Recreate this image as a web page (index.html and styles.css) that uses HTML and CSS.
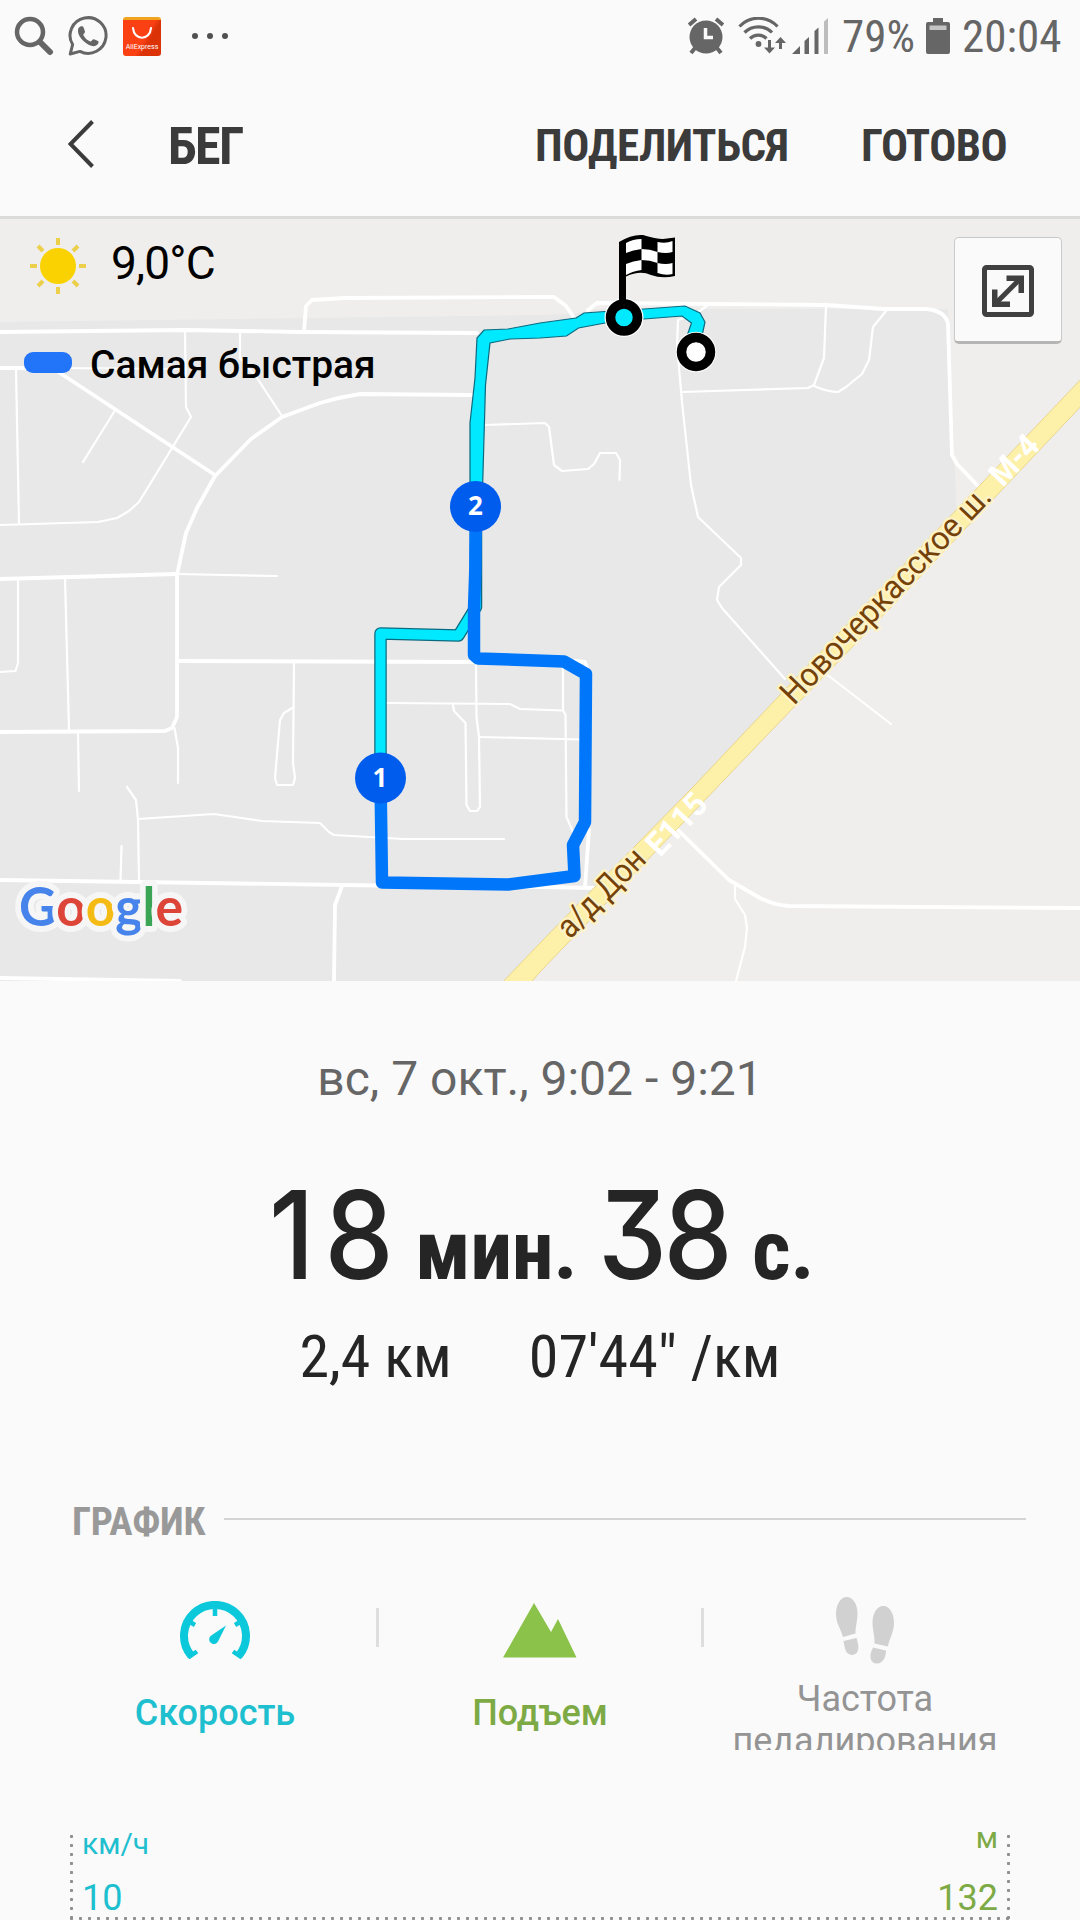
FILE: index.html
```html
<!DOCTYPE html>
<html lang="ru">
<head>
<meta charset="UTF-8">
<meta name="viewport" content="width=device-width, initial-scale=1.0">
<title>Бег</title>
<link rel="stylesheet" href="styles.css">
</head>
<body>
<div class="statusbar">
  <svg class="st-search" width="40" height="40" viewBox="0 0 40 40">
    <circle cx="16" cy="16" r="13" fill="none" stroke="#666" stroke-width="4.500"/>
    <path d="M26 26 L36 36" stroke="#666" stroke-width="6" stroke-linecap="round"/>
  </svg>
  <svg class="st-whatsapp" width="40" height="40" viewBox="0 0 40 40">
    <path d="M2.2 38 L4.6 28.6 A18 17.8 0 1 1 12 35.4 Z" fill="none" stroke="#666" stroke-width="3" stroke-linejoin="round"/>
    <path d="M11 11.5 C13 9.5 15 10 15.6 11.5 L17 15.5 C17.3 17 15 18.300 15.300 19 C17 22.500 19.500 24.500 22.500 25.500 C23.500 25.700 24.500 23 26 23.300 L30 25 C31.500 26 30 29 27 30 C21 31.500 10 22 10 15.500 C10 13.500 10 12.500 11 11.500 Z" fill="#666"/>
  </svg>
  <div class="st-ali"><svg width="38" height="26" viewBox="0 0 38 26"><path d="M10 8 C11 21 27 21 28 8" fill="none" stroke="#fff" stroke-width="2.2" stroke-linecap="round"/></svg><span>AliExpress</span></div>
  <div class="st-dots"><i></i><i></i><i></i></div>

  <svg class="st-alarm" width="36" height="38" viewBox="0 0 36 38">
    <circle cx="18" cy="20" r="16.500" fill="#666"/>
    <path d="M1 8 L8 2 M28 2 L35 8" stroke="#666" stroke-width="4"/>
    <path d="M7 31 L3 36 M29 31 L33 36" stroke="#666" stroke-width="4"/>
    <path d="M17.500 11 V20.500 H25" fill="none" stroke="#fafafa" stroke-width="3.500"/>
  </svg>
  <svg class="st-wifi" width="48" height="38" viewBox="0 0 48 38">
    <g fill="none" stroke="#666" stroke-width="3.200">
      <path d="M1.500 9.500 C12 -1.500 29 -1.500 39.500 9.500"/>
      <path d="M6.500 15.500 C14 8 27 8 34 15.500"/>
      <path d="M12 21.500 C16.500 17 24 17 28.500 21.500"/>
      <path d="M31.500 23 V34 M42.500 32 V23" stroke-width="3"/>
    </g>
    <circle cx="20.500" cy="27" r="2.900" fill="#666"/>
    <path d="M26 30.500 H37 L31.500 36.500 Z M37 26 H48 L42.500 20 Z" fill="#666"/>
  </svg>
  <svg class="st-signal" width="36" height="36" viewBox="0 0 36 36">
    <path d="M0 36 L8 28 V36 Z M12.500 36 V23 L17 19 V36 Z M22.500 36 V13 L26.500 9.500 V36 Z" fill="#666"/>
    <path d="M32 36 V3.500 L36 0 V36 Z" fill="#bdbdbd"/>
  </svg>
  <span class="st-text st-percent">79%</span>
  <svg class="st-battery" width="24" height="36" viewBox="0 0 24 36">
    <path d="M7 0 H17 V4 H22 Q24 4 24 6 V34 Q24 36 22 36 H2 Q0 36 0 34 V6 Q0 4 2 4 H7 Z" fill="#666"/>
    <rect x="3.500" y="7.500" width="17" height="4.500" fill="#c4c4c4"/>
  </svg>
  <span class="st-text st-time">20:04</span>
</div>

<div class="appbar">
  <svg class="back" width="27" height="50" viewBox="0 0 27 50"><path d="M24.500 2.500 L2.500 25 L24.500 47.500" fill="none" stroke="#3b3b3b" stroke-width="4"/></svg>
  <h1>БЕГ</h1>
  <a class="share">ПОДЕЛИТЬСЯ</a>
  <a class="done">ГОТОВО</a>
</div>

<div class="map">
  <svg class="map-canvas" width="1080" height="762" viewBox="0 219 1080 762">
    <polygon fill="#e8e8e8" points="0,322 540,315 573,314 600,309 948,309 952,400 957,520 780,700 510,981 0,981"/>

    <!-- streets -->
    <g class="road wide">
      <path d="M0 332 L186 330 L300 332 L477 333"/>
      <path d="M304 332 L306 306 L312 300 L345 298 L540 297 L554 297 L566 306 L573 316"/>
      <path d="M588 310 L597 303 L826 305 L884 309 L926 309 Q946 311 948 324 L952 455 L957 464 L979 487"/>
      <path d="M57 371 L215 475"/>
      <path d="M472 395 L360 394 Q340 397 320 403 L282 417 L251 439 L215 476 L197 508 L186 533 L177 575 L177 717 L172 728 L165 731 L0 732"/>
      <path d="M0 579 L177 574"/>
      <path d="M177 661 L475 662"/>
      <path d="M0 368 L55 368"/>
      <path d="M0 880 L377 885.500 L540 887 L597 888"/>
      <path d="M342 886 L335 905 L334 981"/>
      <path d="M0 978 L180 981"/>
      <path d="M575 661 L585 662 L588 672"/>
      <path d="M589 830 L585 887"/>
      <path d="M678 830 L729 880 L760 898 Q774 905 788 906 L1080 908"/>
    </g>
    <g class="road">
      <path d="M55 368 L186 369"/>
      <path d="M185 331 L186 407 L191 417 L139 502 L129 511 L117 518 L98 522 L0 525"/>
      <path d="M240 331 L240 358 L257 378 L282 416"/>
      <path d="M16 370 L19 523"/>
      <path d="M114 412 L83 462"/>
      <path d="M177 574 L277 576"/>
      <path d="M18 578 L18 663 L15.500 671 L0 672"/>
      <path d="M65 578 L69 730"/>
      <path d="M78 733 L79 791"/>
      <path d="M174.500 728 L178 748 L178 783"/>
      <path d="M127 787 L136 800 L138 820 L139 880"/>
      <path d="M138 819 L214 814 L262 821 L320 823 L329 832 L334 835 L403 839 L504 839"/>
      <path d="M121.500 846 L120.500 880"/>
      <path d="M294 663 L293 763 L295 778 L293 785 L277 785 L275 778 L280 720 L284 713 L294 707"/>
      <path d="M387 703 L510 704 L520 709 L563 710.500"/>
      <path d="M453 705 L454 711 L465.500 723 L466.500 805 L470 811 L477 811 L480 807 L479 737 L476.500 717 L476 663"/>
      <path d="M479 737 L580 739.500"/>
      <path d="M563 668 L563 710 L565.500 715 L566.500 817 L573 832"/>
      <path d="M708 305 L694 315 L678 320 L677 345 L682 402 L691 485 L698 517 L741 558 L741 565 L719 587 L717 600 L722 608 L785 679"/>
      <path d="M682 392 L808 388 L814 385 L824 358 L826 306"/>
      <path d="M814 386 Q828 392 838 392 L846 387 L862 374 L869 360 L873 327 L886 311"/>
      <path d="M485 425 L545 423 L549 427 L554 465 L562 471 L588 469 L594 464 L600 453 L616 453 L620 460 L619.500 480"/>
      <path d="M827.500 675 L891 724"/>
      <path d="M735 883 L735 899 L745 915 L747 928 L745 947 L736 981"/>
    </g>

    <!-- highway -->
    <polygon class="highway" points="500,985 540,943 638,843 693,787 778,697 1084,376 1084,403 898,600 795,706 540,972 528,986"/>
    <text class="road-name" transform="translate(794 706) rotate(-46.200)" textLength="288" lengthAdjust="spacingAndGlyphs">Новочеркасское ш.</text>
    <text class="road-code" transform="translate(1003 488) rotate(-46.500)" textLength="56" lengthAdjust="spacingAndGlyphs">М-4</text>
    <text class="road-name" transform="translate(570 940) rotate(-45.500)" textLength="111" lengthAdjust="spacingAndGlyphs">а/д Дон</text>
    <text class="road-code" transform="translate(660 858) rotate(-46.500)" textLength="72" lengthAdjust="spacingAndGlyphs">E115</text>

    <!-- track -->
    <polygon class="slow" points="470,490 470,423 475,378 477,338 484,330 508,329 540,323 576,318 584,313 605,311.500 644,309 685,306 700,313 705,322 702,336 687,336 691.500,323 682,316 644,319 605,323 578.500,328 566.500,336 540,338 510,339 490,343 485.500,385 482.500,490"/>
    <path class="slow-edge" d="M380.500 770 V633.500 L458.500 635.500 L476 607 V530"/>
    <path class="slow-line" d="M380.500 770 V633.500 L458.500 635.500 L476 607 V530"/>
    <path class="fast" d="M475.800 510 L475.300 570 L474 610 L474 655 L478 658.500 L564 661.500 L586 674 L585 822 L573 845 L574.500 876 L508 884.500 L382 882.500 L380.500 778"/>

    <g class="km">
      <circle cx="475.500" cy="506.500" r="25.500"/>
      <text x="475.500" y="515">2</text>
      <circle cx="380.500" cy="778" r="25.500"/>
      <text x="380" y="786.500">1</text>
    </g>

    <path d="M619 300 V242 Q632 234 643 235 Q656 239 663 239 L675 237.500 V276 Q662 279 651 275 Q640 270 626 276.500 V300 Z" fill="#000"/>
    <path fill="#fff" d="M626 243 Q633 239 641.500 239 V249 Q633 250 626 253 Z M657.500 242 Q666 244 672.500 241 V252 Q666 254 657.500 252 Z M641.500 249 Q650 249 657.500 252 V263 Q650 260 641.500 260 Z M626 264 Q633 261 641.500 260 V270 Q633 271 626 275 Z M657.500 263 Q666 265 672.500 263 V274 Q666 276 657.500 273 Z"/>
    <circle cx="624" cy="317.500" r="19.500" fill="#fff"/>
    <circle cx="624" cy="317.500" r="13.500" fill="#00e9ff" stroke="#000" stroke-width="9.500"/>
    <circle cx="696" cy="352" r="20.300" fill="#fff"/>
    <circle cx="696" cy="352" r="14.500" fill="#fff" stroke="#000" stroke-width="9.500"/>
    <path d="M622.500 303 V270" stroke="#000" stroke-width="7"/>

    <text class="google" x="19" y="926" textLength="164" lengthAdjust="spacingAndGlyphs"><tspan fill="#4683ea">G</tspan><tspan fill="#dd4539">o</tspan><tspan fill="#f5bb15">o</tspan><tspan fill="#4683ea">g</tspan><tspan fill="#3ba556">l</tspan><tspan fill="#dd4539">e</tspan></text>
  </svg>

  <div class="weather">
    <svg width="58" height="58" viewBox="-29 -29 58 58">
      <circle r="18" fill="#fad201"/>
      <path d="M0 -28 V-21 M0 21 V28 M-28 0 H-21 M21 0 H28 M-20 -20 L-15 -15 M15 15 L20 20 M-20 20 L-15 15 M15 -15 L20 -20" stroke="#ecd04c" stroke-width="4"/>
    </svg>
    <span>9,0°C</span>
  </div>
  <div class="legend"><i></i><span>Самая быстрая</span></div>

  <div class="expand">
    <svg width="52" height="52" viewBox="0 0 52 52">
      <rect x="2.500" y="2.500" width="47" height="47" rx="2" fill="none" stroke="#404040" stroke-width="5"/>
      <path d="M15 37 L37 15" stroke="#404040" stroke-width="5"/>
      <path d="M24.500 10.500 H42 V28 H36.500 V16 H24.500 Z M10 24.500 H15.500 V36.500 H28 V42 H10 Z" fill="#404040"/>
    </svg>
  </div>
</div>

<div class="summary">
  <p class="date">вс, 7 окт., 9:02 - 9:21</p>
  <p class="duration"><b class="num n1">18</b><span class="unit u1">мин.</span><b class="num n2">38</b><span class="unit u2">с.</span></p>
  <p class="pace"><span>2,4 км</span><span>07'44" /км</span></p>
</div>

<div class="section-title"><h2>ГРАФИК</h2><hr></div>

<div class="tabs">
  <div class="tab speed">
    <svg width="72" height="58" viewBox="0 0 72 58">
      <path d="M12 54.500 A31 31 0 1 1 60 54.500" fill="none" stroke="#0bc8db" stroke-width="8"/>
      <path d="M36 7 V15 M10 20.500 L16 24 M62 20.500 L56 24 M9 56.500 L18 50.500 M63 56.500 L54 50.500" stroke="#0bc8db" stroke-width="4.500"/>
      <path d="M47 24.500 L39 40.500 A4.700 4.700 0 1 1 31.500 35 Z" fill="#0bc8db"/>
    </svg>
    <span>Скорость</span>
  </div>
  <i class="divider"></i>
  <div class="tab climb">
    <svg width="74" height="58" viewBox="0 0 74 58"><path d="M0 56.500 L31 2 L48 31 L55 18 L73.500 56.500 Z" fill="#8bc34a"/></svg>
    <span>Подъем</span>
  </div>
  <i class="divider"></i>
  <div class="tab cadence">
    <svg width="58" height="68" viewBox="0 0 58 68">
      <g fill="#d1d1d1">
        <path d="M10.500 0 C17 0 21.500 7 21.500 16 C21.500 24 19.500 29 19.500 36.500 L7 40 C5 32 0 27 0 17 C0 7 5 0 10.500 0 Z"/>
        <path d="M7.500 44 L20.500 41 C23 49 24 56 17 58 C10 58 9 53 7.500 44 Z"/>
        <path d="M47.500 9 C54 9 58 17 58 26 C58 36 53 42 52 49.500 L38.500 46.500 C39 39 36.500 33 36.500 26 C36.500 16 41 9 47.500 9 Z"/>
        <path d="M37 50.500 L50 53.500 C50 60 47 66.500 41 66.500 C34 66.500 32.500 59 37 50.500 Z"/>
      </g>
    </svg>
    <span>Частота<br>педалирования</span>
  </div>
</div>

<div class="chart">
  <div class="axis left"><small>км/ч</small><span>10</span></div>
  <div class="axis right"><small>м</small><span>132</span></div>
</div>
</body>
</html>
```
FILE: styles.css
```css
* { box-sizing: border-box; }
body { margin: 0; width: 1080px; height: 1920px; overflow: hidden; background: #fafafa; font-family: Roboto, "Noto Sans", sans-serif; color: #252525; }
h1, h2, p, hr { margin: 0; }
svg { display: block; flex: none; }

.statusbar { display: flex; align-items: center; height: 72px; padding-left: 14px; color: #666; }
.st-whatsapp { margin-left: 14px; }
.st-ali { width: 38px; height: 39px; margin-left: 15px; border-radius: 3px; border-top: 3px solid #f0a41d; background: linear-gradient(120deg, #fb4013 55%, #dc3208 65%); position: relative; }
.st-ali span { position: absolute; left: 0; right: 0; top: 22px; font-size: 7px; line-height: 10px; text-align: center; color: #fff; }
.st-dots { display: flex; gap: 9px; margin-left: 31px; }
.st-dots i { width: 6px; height: 6px; border-radius: 3px; background: #505050; }
.st-alarm { margin-left: 460px; }
.st-wifi { margin-left: 14px; }
.st-signal { margin-left: 6px; }
.st-text { font-size: 45px; line-height: 72px; font-family: "Roboto Condensed", Roboto; font-stretch: 75%; padding-top: 2px; white-space: nowrap; }
.st-percent { width: 72px; margin-left: 14px; }
.st-battery { margin-left: 12px; }
.st-time { margin-left: 12px; }

.appbar { display: flex; align-items: center; height: 144px; color: #3b3b3b; font-family: "Roboto Condensed", Roboto; font-stretch: 75%; font-weight: 700; font-size: 45px; white-space: nowrap; }
.back { margin-left: 68px; }
.appbar h1 { font-size: 52px; letter-spacing: -1.5px; width: 76px; margin-left: 73px; padding-top: 4px; }
.share { width: 253px; margin-left: 291px; padding-top: 2px; letter-spacing: -0.5px; }
.done { margin-left: 73px; padding-top: 2px; letter-spacing: -0.5px; }

.map { position: relative; height: 765px; border-top: 3px solid #dbdcda; background: #efeeec; }
.road path { fill: none; stroke: #fff; stroke-width: 2.2; stroke-linejoin: round; stroke-linecap: round; }
.road.wide path { stroke-width: 3.8; }
.highway { fill: #fdf0a8; stroke: #e9d58f; stroke-width: 1; }
.road-name { font-size: 33px; fill: #744108; stroke: #fdf2c6; stroke-width: 5; stroke-linejoin: round; paint-order: stroke; }
.road-code { font-size: 33px; font-weight: 700; fill: #fff; }
.slow { fill: #00e9ff; stroke: #0b6a80; stroke-width: 1.2; }
.slow-edge { fill: none; stroke: #0b6a80; stroke-width: 12.5; stroke-linejoin: round; }
.slow-line { fill: none; stroke: #00e9ff; stroke-width: 10; stroke-linejoin: round; }
.fast { fill: none; stroke: #0077fb; stroke-width: 12.5; stroke-linejoin: round; }
.km circle { fill: #005ced; }
.km text { fill: #fff; font: 700 26px "Noto Sans"; text-anchor: middle; }
.google { font: 700 54px Lato; stroke: #f6f6f6; stroke-width: 12; stroke-linejoin: round; paint-order: stroke; }

.weather { position: absolute; left: 29px; top: 18px; display: flex; align-items: center; color: #000; font-size: 46px; letter-spacing: -0.8px; }
.weather span { margin: -7px 0 0 24px; }
.legend { position: absolute; left: 24px; top: 123px; display: flex; align-items: center; color: #000; font-size: 39px; font-weight: 500; white-space: nowrap; }
.legend i { width: 48px; height: 21px; margin: -5px 18px 0 0; border-radius: 9px; background: #2274f8; }
.expand { position: absolute; left: 954px; top: 18px; width: 108px; height: 107px; padding: 27px; border: 1px solid #c9c9c9; border-bottom: 3px solid #b5b5b5; border-radius: 5px; background: #fafafa; }

.summary { height: 502px; padding-top: 68px; }
.date { text-align: center; font-size: 48px; line-height: 60px; color: #666; }
.duration { display: flex; align-items: baseline; height: 150px; margin-top: 51px; padding-left: 269px; white-space: nowrap; }
.num { font-family: Inter; font-size: 122px; font-weight: 500; line-height: 150px; font-feature-settings: "cv09"; transform: scaleX(0.9); transform-origin: 0 0; }
.n1 { width: 146px; letter-spacing: 11px; }
.n2 { width: 154px; letter-spacing: -4px; }
.unit { font-family: "Roboto Condensed", Roboto; font-stretch: 75%; font-weight: 700; font-size: 84px; letter-spacing: -0.5px; }
.u1 { width: 183px; }
.pace { display: flex; justify-content: center; gap: 77px; margin-top: 11px; font-family: "Roboto Condensed", Roboto; font-stretch: 75%; font-size: 60px; white-space: nowrap; }

.section-title { display: flex; align-items: center; height: 72px; padding: 0 54px 0 72px; color: #999; }
.section-title h2 { width: 152px; padding-top: 5px; font-family: "Roboto Condensed", Roboto; font-stretch: 75%; font-size: 39px; font-weight: 700; letter-spacing: -0.3px; }
.section-title hr { flex: 1; height: 2px; border: 0; background: #d4d4d4; }

.tabs { display: grid; grid-template-columns: 322px 3px 322px 3px 322px; padding: 46px 0 0 54px; height: 195px; overflow: hidden; }
.tab { display: flex; flex-direction: column; align-items: center; font-size: 36px; line-height: 42px; text-align: center; }
.tab span { margin-top: 33px; }
.divider { height: 39px; margin-top: 7px; background: #dedede; }
.speed { color: #1ebfcf; font-weight: 500; }
.climb { color: #7daa45; font-weight: 500; }
.cadence { color: #949494; margin-top: -4px; }
.cadence span { margin-top: 13px; }

.chart { display: flex; justify-content: space-between; margin: 82px 67px 0; height: 88px; background: radial-gradient(circle, #8f8f8f 1.3px, transparent 2px) 9px 82px / 9px 9px repeat-x; }
.axis { display: flex; flex-direction: column; font-size: 36px; line-height: 40px; background: radial-gradient(circle, #8f8f8f 1.3px, transparent 2px) 0 0 / 9px 9px repeat-y; }
.axis small { height: 30px; font-size: 30px; line-height: 30px; }
.left { padding-left: 15px; color: #1ebfcf; }
.left small { margin: -3px 0 19px; }
.right { padding-right: 15px; color: #7daa45; text-align: right; background-position: 100% 0; }
.right small { margin: -9px 0 25px; }
```
